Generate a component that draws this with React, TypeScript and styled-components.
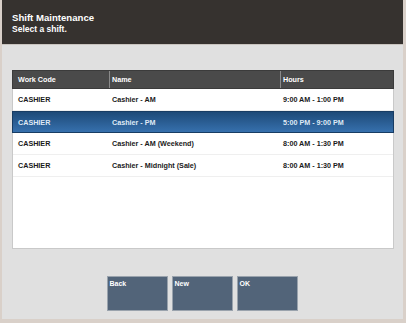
import React, { FC } from "react";
import styled, { createGlobalStyle, css } from "styled-components";

const GlobalStyle = createGlobalStyle`
  html, body {
    margin: 0;
    padding: 0;
    background: #e0e0e0;
  }
  * {
    box-sizing: border-box;
  }
`;

const Screen = styled.div`
  width: 406px;
  height: 323px;
  display: flex;
  flex-direction: column;
  background: #e0e0e0;
  border-left: 2px solid #d9d0c9;
  border-right: 3px solid #d9d0c9;
  border-bottom: 4px solid #d9d0c9;
  font-family: "Liberation Sans", Arial, sans-serif;
  overflow: hidden;
`;

const Header = styled.header`
  height: 45px;
  margin: 0 -3px 0 -2px;
  padding: 12px 0 0 12px;
  display: flex;
  flex-direction: column;
  background: #36322f;
  border-bottom: 1px solid #c9c4bf;
  color: #ffffff;
`;

const Title = styled.h1`
  margin: 0;
  font-size: 9.6px;
  line-height: 12px;
  font-weight: 700;
`;

const Subtitle = styled.p`
  margin: 0;
  font-size: 8.5px;
  line-height: 11px;
  font-weight: 700;
`;

const Content = styled.main`
  flex: 1;
  display: flex;
  flex-direction: column;
  padding: 25px 9px 0 10px;
`;

const Table = styled.div`
  height: 179px;
  background: #ffffff;
  border: 1px solid #c9c9c9;
  border-top: none;
`;

const columns = "96px 171px 1fr";

const HeadRow = styled.div`
  display: grid;
  grid-template-columns: ${columns};
  height: 19px;
  background: #4a4a4a;
  border: 1px solid #3b3b3b;
  margin: 0 -1px;
`;

const HeadCell = styled.div`
  display: flex;
  align-items: center;
  padding-left: 5px;
  font-size: 7.2px;
  font-weight: 700;
  color: #ffffff;
  & + & {
    border-left: 1px solid #8a8a8a;
    padding-left: 2px;
  }
`;

const Row = styled.div<{ selected?: boolean }>`
  display: grid;
  grid-template-columns: ${columns};
  height: 22px;
  border-bottom: 1px solid #efefef;
  color: #1a1a1a;
  ${({ selected }) =>
    selected &&
    css`
      margin: 0 -1px;
      background: linear-gradient(#1e4a78, #3670ad);
      border: 1px solid #183c63;
      color: #dfe9f5;
    `}
`;

const Cell = styled.div`
  display: flex;
  align-items: center;
  padding-left: 5px;
  font-size: 7.2px;
  font-weight: 700;
  & + & {
    padding-left: 3px;
  }
`;

const ButtonBar = styled.div`
  display: flex;
  justify-content: center;
  gap: 4px;
  margin-top: 27px;
  padding-right: 2px;
`;

const ActionButton = styled.button`
  width: 61px;
  height: 35px;
  padding: 3px 0 0 2px;
  display: flex;
  align-items: flex-start;
  background: #526479;
  border: 1px solid #9aa3ad;
  color: #ffffff;
  font-family: "Liberation Sans", Arial, sans-serif;
  font-size: 7px;
  font-weight: 700;
  text-align: left;
`;

type Shift = {
  code: string;
  name: string;
  hours: string;
};

const shifts: Shift[] = [
  { code: "CASHIER", name: "Cashier - AM", hours: "9:00 AM - 1:00 PM" },
  { code: "CASHIER", name: "Cashier - PM", hours: "5:00 PM - 9:00 PM" },
  { code: "CASHIER", name: "Cashier - AM (Weekend)", hours: "8:00 AM - 1:30 PM" },
  { code: "CASHIER", name: "Cashier - Midnight (Sale)", hours: "8:00 AM - 1:30 PM" },
];

const App: FC = () => {
  const selected = 1;

  return (
    <>
      <GlobalStyle />
      <Screen>
        <Header>
          <Title>Shift Maintenance</Title>
          <Subtitle>Select a shift.</Subtitle>
        </Header>
        <Content>
          <Table>
            <HeadRow>
              <HeadCell>Work Code</HeadCell>
              <HeadCell>Name</HeadCell>
              <HeadCell>Hours</HeadCell>
            </HeadRow>
            {shifts.map((shift, index) => (
              <Row key={index} selected={index === selected}>
                <Cell>{shift.code}</Cell>
                <Cell>{shift.name}</Cell>
                <Cell>{shift.hours}</Cell>
              </Row>
            ))}
          </Table>
          <ButtonBar>
            <ActionButton>Back</ActionButton>
            <ActionButton>New</ActionButton>
            <ActionButton>OK</ActionButton>
          </ButtonBar>
        </Content>
      </Screen>
    </>
  );
};

export default App;
